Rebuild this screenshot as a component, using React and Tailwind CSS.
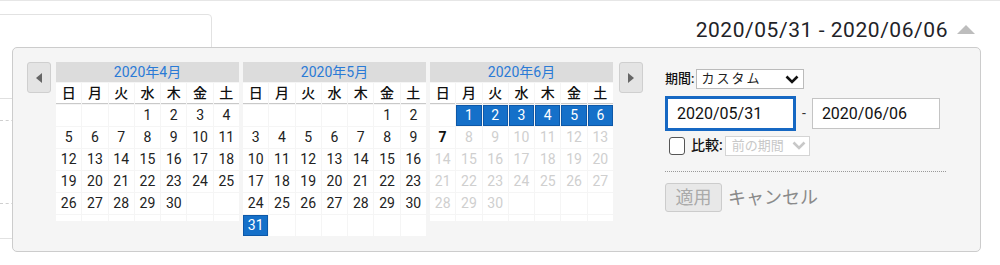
import React from 'react';

const font = "font-['Roboto','Noto_Sans_CJK_JP',sans-serif]";
const dayNames = ['日', '月', '火', '水', '木', '金', '土'];

const buildWeeks = (offset, days) => {
    const cells = [];
    for (let i = 0; i < offset; i++) cells.push(null);
    for (let d = 1; d <= days; d++) cells.push(d);
    while (cells.length < 42) cells.push(null);
    const weeks = [];
    for (let w = 0; w < 6; w++) weeks.push(cells.slice(w * 7, w * 7 + 7));
    return weeks;
};

const months = [
    { title: '2020年4月', weeks: buildWeeks(3, 30), state: () => 'normal' },
    { title: '2020年5月', weeks: buildWeeks(5, 31), state: (d) => (d === 31 ? 'selected' : 'normal') },
    {
        title: '2020年6月',
        weeks: buildWeeks(1, 30),
        state: (d) => (d <= 6 ? 'selected' : d === 7 ? 'today' : 'disabled'),
    },
];

const DayCell = ({ day, state, tall }) => {
    if (day === null) {
        return <div className={`bg-white ${tall ? 'h-[21px]' : 'h-[6px]'}`} />;
    }
    if (state === 'selected') {
        return (
            <div className="h-[21px] bg-[#1570c9] border border-[#0d58a8] text-white text-[14px] leading-[19px] text-center">
                {day}
            </div>
        );
    }
    const color =
        state === 'disabled' ? 'text-[#cfcfcf]' : state === 'today' ? 'text-[#111] font-bold' : 'text-[#222]';
    return <div className={`h-[21px] bg-white text-[14px] leading-[21px] text-center ${color}`}>{day}</div>;
};

const MonthCalendar = ({ month }) => (
    <div className="w-[183px]">
        <div className="h-[20px] bg-[#dcdcdc] text-[14px] leading-[20px] text-center text-[#2a7ad6]">{month.title}</div>
        <div className="grid grid-cols-7 gap-x-[1px] mt-[1px]">
            {dayNames.map((n) => (
                <div
                    key={n}
                    className="h-[21px] bg-white border-b border-[#c9c9c9] text-[14px] leading-[20px] text-center font-medium text-[#111]"
                >
                    {n}
                </div>
            ))}
        </div>
        <div className="flex flex-col gap-y-[1px] mt-[1px]">
            {month.weeks.map((week, wi) => {
                const tall = week.some((d) => d !== null);
                return (
                    <div key={wi} className="grid grid-cols-7 gap-x-[1px]">
                        {week.map((d, di) => (
                            <DayCell key={di} day={d} state={d ? month.state(d) : null} tall={tall} />
                        ))}
                    </div>
                );
            })}
        </div>
    </div>
);

const NavButton = ({ dir }) => (
    <div className="w-[24px] h-[31px] shrink-0 rounded-[3px] border border-[#cfcfcf] bg-[#e4e4e4] flex items-center justify-center">
        <svg width="6" height="10" viewBox="0 0 6 10">
            {dir === 'left' ? <path d="M6 0 L0 5 L6 10 Z" fill="#666" /> : <path d="M0 0 L6 5 L0 10 Z" fill="#666" />}
        </svg>
    </div>
);

const Chevron = ({ color }) => (
    <svg width="14" height="9" viewBox="0 0 14 9">
        <path d="M1.5 1.5 L7 7 L12.5 1.5" fill="none" stroke={color} strokeWidth="2.6" />
    </svg>
);

const App = () => {
    return (
        <div className={`relative w-[1000px] h-[265px] bg-white overflow-hidden ${font}`}>
            <div className="h-px bg-[#e6e6e6]" />
            <div className="flex justify-between">
                <div className="mt-[13px] w-[213px] h-[225px] -ml-px border border-[#e2e2e2] rounded-tr-[4px] relative">
                    <div className="absolute left-0 top-[83px] w-[20px] h-px bg-[#e0e0e0]" />
                    <div className="absolute left-0 top-[105px] w-[20px] border-t border-dashed border-[#cfcfcf]" />
                    <div className="absolute left-0 top-[188px] w-[20px] border-t border-dashed border-[#cfcfcf]" />
                </div>
                <div className="flex items-center gap-[9px] pr-[25px] pt-[17px] h-[40px]">
                    <span className="text-[21px] leading-[24px] text-[#1f2328] tracking-[0.55px]">2020/05/31 - 2020/06/06</span>
                    <svg width="18" height="9" viewBox="0 0 18 9">
                        <path d="M0 9 L9 0 L18 9 Z" fill="#bdbdbd" />
                    </svg>
                </div>
            </div>

            <div className="absolute left-[12px] top-[47px] w-[969px] h-[205px] rounded-[5px] border border-[#cccccc] bg-[#f5f5f5] flex items-start pt-[14px] pl-[14px]">
                <NavButton dir="left" />
                <div className="flex ml-[5px] gap-[4px]">
                    {months.map((m) => (
                        <MonthCalendar key={m.title} month={m} />
                    ))}
                </div>
                <div className="ml-[6px]">
                    <NavButton dir="right" />
                </div>

                <div className="ml-[22px] mt-[7px] w-[282px]">
                    <div className="flex items-center gap-[2px]">
                        <span className="text-[13px] text-[#111] font-medium">期間:</span>
                        <div className="w-[108px] h-[20px] bg-white border border-[#bbbbbb] flex items-center justify-between pl-[4px] pr-[4px]">
                            <span className="text-[13px] tracking-[2px] text-[#222]">カスタム</span>
                            <Chevron color="#111" />
                        </div>
                    </div>
                    <div className="flex items-center mt-[7px]">
                        <div className="w-[131px] h-[35px] bg-white border-[3px] border-[#1668c3] pl-[9px] flex items-center text-[16px] text-[#111]">
                            2020/05/31
                        </div>
                        <span className="mx-[6px] text-[14px] text-[#333]">-</span>
                        <div className="w-[128px] h-[31px] bg-white border border-[#c4c4c4] pl-[9px] flex items-center text-[16px] text-[#111]">
                            2020/06/06
                        </div>
                    </div>
                    <div className="flex items-center mt-[4px] ml-[4px]">
                        <div className="w-[16px] h-[18px] rounded-[3px] border border-[#555] bg-white" />
                        <span className="ml-[6px] text-[14px] font-medium text-[#111]">比較:</span>
                        <div className="ml-[2px] w-[85px] h-[20px] border border-[#d4d4d4] bg-white flex items-center justify-between pl-[6px] pr-[3px]">
                            <span className="text-[13px] text-[#c8c8c8]">前の期間</span>
                            <Chevron color="#c8c8c8" />
                        </div>
                    </div>
                    <div className="mt-[15px] w-[281px] border-t border-dotted border-[#999]" />
                    <div className="flex items-center mt-[11px]">
                        <div className="w-[57px] h-[29px] rounded-[3px] border border-[#cccccc] bg-[#e8e8e8] flex items-center justify-center text-[18px] text-[#aaaaaa]">
                            適用
                        </div>
                        <span className="ml-[6px] text-[18px] text-[#8a8a8a]">キャンセル</span>
                    </div>
                </div>
            </div>
        </div>
    );
};

export default App;
